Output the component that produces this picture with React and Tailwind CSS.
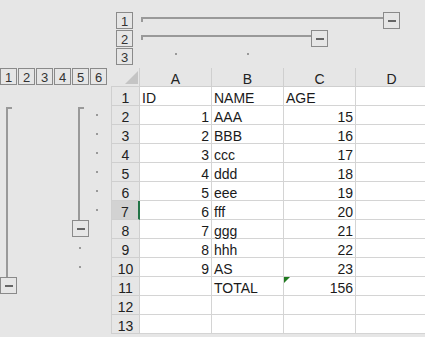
const data = [
  ['ID', 'NAME', 'AGE'],
  [1, 'AAA', 15],
  [2, 'BBB', 16],
  [3, 'ccc', 17],
  [4, 'ddd', 18],
  [5, 'eee', 19],
  [6, 'fff', 20],
  [7, 'ggg', 21],
  [8, 'hhh', 22],
  [9, 'AS', 23],
  ['', 'TOTAL', 156],
  ['', '', ''],
  ['', '', ''],
];

function LevelBtn({ label }) {
  return (
    <div className="flex h-[17px] w-[17px] shrink-0 items-center justify-center border border-[#8a8a8a] pt-[1px] text-[13px] leading-none text-[#333]">
      {label}
    </div>
  );
}

function MinusBtn() {
  return (
    <div className="flex h-[17px] w-[17px] shrink-0 items-center justify-center border border-[#8a8a8a]">
      <div className="ml-[1px] h-[2px] w-[8px] bg-[#666]"></div>
    </div>
  );
}

function Dot({ className = '' }) {
  return <div className={`h-[2px] w-[2px] shrink-0 bg-[#999] ${className}`}></div>;
}

function Cell({ value, col, row }) {
  const isNum = typeof value === 'number';
  return (
    <div
      className={`relative h-[19px] w-[72px] shrink-0 border-r border-b border-[#d4d4d4] bg-white px-[2px] pt-[3px] leading-[16px] whitespace-nowrap ${
        isNum ? 'text-right' : 'text-left'
      }`}
    >
      {col === 2 && row === 11 && (
        <svg className="absolute top-0 left-0" width="6" height="6" viewBox="0 0 6 6">
          <polygon points="0,0 6,0 0,6" fill="#1f7a1f" />
        </svg>
      )}
      {value}
    </div>
  );
}

export default function App() {
  return (
    <div
      className="flex h-[337px] w-[425px] flex-col overflow-hidden bg-[#e6e6e6] text-[14px] text-[#1a1a1a]"
      style={{ fontFamily: '"Liberation Sans", Arial, sans-serif' }}
    >
      {/* column outline */}
      <div className="flex h-[68px] shrink-0">
        <div className="w-[116px] shrink-0"></div>
        <div className="flex flex-col gap-[1px] pt-[12px]">
          <LevelBtn label="1" />
          <LevelBtn label="2" />
          <LevelBtn label="3" />
        </div>
        <div className="w-[7px] shrink-0"></div>
        <div className="flex flex-col gap-[1px] pt-[12px]">
          <div className="flex h-[17px] items-start">
            <div className="mt-[5px] ml-[1px] h-[5px] w-[242px] border-t-2 border-l-2 border-[#999]"></div>
            <MinusBtn />
          </div>
          <div className="flex h-[17px] items-start">
            <div className="mt-[5px] ml-[1px] h-[5px] w-[170px] border-t-2 border-l-2 border-[#999]"></div>
            <MinusBtn />
          </div>
          <div className="flex h-[17px] items-start">
            <Dot className="mt-[5px] ml-[35px]" />
            <Dot className="mt-[5px] ml-[70px]" />
          </div>
        </div>
      </div>

      <div className="flex">
        {/* row outline */}
        <div className="flex w-[111px] shrink-0 flex-col">
          <div className="flex h-[19px] gap-[1px]">
            {['1', '2', '3', '4', '5', '6'].map((l) => (
              <LevelBtn key={l} label={l} />
            ))}
          </div>
          <div className="flex">
            <div className="flex w-[17px] flex-col">
              <div className="h-[20px]"></div>
              <div className="ml-[6px] h-[170px] w-[6px] border-t-2 border-l-2 border-[#999]"></div>
              <MinusBtn />
            </div>
            <div className="w-[55px] shrink-0"></div>
            <div className="flex w-[17px] flex-col">
              <div className="h-[20px]"></div>
              <div className="ml-[6px] h-[113px] w-[6px] border-t-2 border-l-2 border-[#999]"></div>
              <MinusBtn />
              <Dot className="mt-[10px] ml-[7px]" />
              <Dot className="mt-[17px] ml-[7px]" />
            </div>
            <div className="w-[1px] shrink-0"></div>
            <div className="flex w-[17px] flex-col">
              <Dot className="mt-[27px] ml-[6px]" />
              <Dot className="mt-[17px] ml-[6px]" />
              <Dot className="mt-[17px] ml-[6px]" />
              <Dot className="mt-[17px] ml-[6px]" />
              <Dot className="mt-[17px] ml-[6px]" />
              <Dot className="mt-[17px] ml-[6px]" />
            </div>
          </div>
        </div>

        {/* sheet */}
        <div className="flex flex-col">
          <div className="flex h-[19px]">
            <div className="flex h-[19px] w-[29px] shrink-0 items-end justify-end border-r border-b border-[#cfcfcf] pr-[1px] pb-[2px]">
              <svg width="13" height="13" viewBox="0 0 13 13">
                <polygon points="13,0 13,13 0,13" fill="#c4c4c4" />
              </svg>
            </div>
            {['A', 'B', 'C', 'D'].map((c) => (
              <div
                key={c}
                className="h-[19px] w-[72px] shrink-0 border-r border-b border-[#cfcfcf] pt-[3px] text-center leading-[16px] text-[#222]"
              >
                {c}
              </div>
            ))}
          </div>
          {data.map((r, i) => (
            <div key={i} className="flex h-[19px]">
              <div
                className={`h-[19px] w-[29px] shrink-0 border-b border-l border-[#cfcfcf] pt-[3px] text-center leading-[16px] text-[#222] ${
                  i === 6 ? 'border-r-2 border-r-[#217346] bg-[#d2d2d2]' : 'border-r'
                }`}
              >
                {i + 1}
              </div>
              {r.map((v, j) => (
                <Cell key={j} value={v} col={j} row={i + 1} />
              ))}
              <Cell value="" col={3} row={i + 1} />
            </div>
          ))}
        </div>
      </div>
    </div>
  );
}
